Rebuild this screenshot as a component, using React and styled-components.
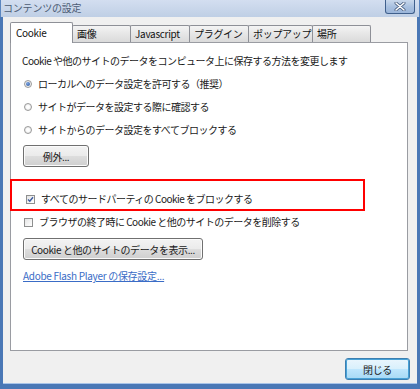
import React from 'react'
import styled, { createGlobalStyle } from 'styled-components'

const GlobalStyle = createGlobalStyle`
  html, body {
    margin: 0;
    padding: 0;
    background: #ffffff;
  }
  body {
    font-family: "Noto Sans CJK JP", "Noto Sans", sans-serif;
    font-size: 10px;
    color: #1a1a1a;
  }
`

const tabs = [
  { label: 'Cookie', width: 63, active: true },
  { label: '画像', width: 59 },
  { label: 'Javascript', width: 60 },
  { label: 'プラグイン', width: 60 },
  { label: 'ポップアップ', width: 65 },
  { label: '場所', width: 59 },
]

const radios = [
  { label: 'ローカルへのデータ設定を許可する（推奨）', checked: true },
  { label: 'サイトがデータを設定する際に確認する' },
  { label: 'サイトからのデータ設定をすべてブロックする' },
]

const Window = styled.div`
  width: 420px;
  height: 389px;
  display: flex;
  flex-direction: column;
  box-sizing: border-box;
  background: #4a78b6;
  overflow: hidden;
`

const TitleBar = styled.div`
  height: 17px;
  flex: none;
  display: flex;
  align-items: flex-start;
  justify-content: space-between;
  padding: 0 4px 0 2px;
  background: linear-gradient(#d3def0, #bfcfe5);
  border-left: 1px solid #5b86c0;
  border-right: 1px solid #5b86c0;
  box-sizing: border-box;
`

const Title = styled.div`
  font-size: 10px;
  letter-spacing: -0.2px;
  line-height: 15px;
  color: #4c5c74;
`

const CloseButton = styled.div`
  width: 30px;
  height: 14px;
  box-sizing: border-box;
  border: 1px solid #3f5f8c;
  border-top: none;
  border-radius: 0 0 3px 3px;
  background: linear-gradient(#c9d8ec, #a7bfdf 55%, #9bb6da);
  display: flex;
  align-items: center;
  justify-content: center;
`

const Client = styled.div`
  flex: 1;
  display: flex;
  flex-direction: column;
  margin: 0 3px 5px 3px;
  background: #f0f0f0;
  border-bottom: 1px solid #a9c4e8;
  padding: 5px 9px 0 7px;
`

const TabRow = styled.div`
  display: flex;
  align-items: flex-end;
  height: 21px;
  margin-bottom: -1px;
  position: relative;
  z-index: 1;
`

const Tab = styled.div`
  width: ${p => p.$width}px;
  box-sizing: border-box;
  height: ${p => (p.$active ? 21 : 17)}px;
  margin-bottom: ${p => (p.$active ? 0 : 1)}px;
  margin-left: ${p => (p.$first ? 0 : -1)}px;
  padding: ${p => (p.$active ? '3px 5px 0' : '1px 4px 0')};
  border: 1px solid #8e9097;
  border-bottom: none;
  border-radius: 2px 2px 0 0;
  background: ${p => (p.$active ? '#ffffff' : 'linear-gradient(#f4f4f4, #e6e6e6 50%, #dadada)')};
  font-size: 10px;
  line-height: 14px;
  letter-spacing: -0.3px;
  color: #111111;
  white-space: nowrap;
`

const Panel = styled.div`
  height: 309px;
  box-sizing: border-box;
  background: #ffffff;
  border: 1px solid #9a9ca2;
  padding: 11px 11px 0 11px;
  display: flex;
  flex-direction: column;
`

const Line = styled.div`
  height: 14px;
  line-height: 14px;
  letter-spacing: -0.5px;
  white-space: nowrap;
  margin-top: ${p => p.$top || 0}px;
`

const OptionRow = styled.div`
  height: 14px;
  display: flex;
  align-items: center;
  gap: 6px;
  padding-left: 2px;
  line-height: 14px;
  letter-spacing: -0.5px;
  white-space: nowrap;
  margin-top: ${p => p.$top || 0}px;
`

const RadioCircle = styled.span`
  width: 8px;
  height: 8px;
  flex: none;
  box-sizing: border-box;
  border-radius: 50%;
  border: 1px solid #9a9a9a;
  background: radial-gradient(circle, #ffffff 30%, #dcdcdc 100%);
  display: flex;
  align-items: center;
  justify-content: center;
  &::after {
    content: '';
    width: 4px;
    height: 4px;
    border-radius: 50%;
    background: ${p => (p.$checked ? 'radial-gradient(circle at 40% 35%, #7ea4e0, #1f4f9a)' : 'transparent')};
  }
`

const CheckBox = styled.span`
  width: 9px;
  height: 9px;
  flex: none;
  box-sizing: border-box;
  border: 1px solid #8e8f8f;
  background: linear-gradient(135deg, #e4e4e4, #ffffff);
  display: flex;
  align-items: center;
  justify-content: center;
`

const Button = styled.div`
  width: ${p => p.$width}px;
  height: 22px;
  box-sizing: border-box;
  margin-top: ${p => p.$top || 0}px;
  margin-left: 1px;
  border: 1px solid #707070;
  border-radius: 3px;
  background: linear-gradient(#f3f3f3, #ebebeb 48%, #dddddd 52%, #cfcfcf);
  box-shadow: inset 0 0 0 1px #fbfbfb;
  display: flex;
  align-items: center;
  justify-content: center;
  letter-spacing: -0.4px;
  white-space: nowrap;
`

const Highlight = styled.div`
  width: 355px;
  height: 32px;
  box-sizing: border-box;
  margin: 12px 0 0 -12px;
  border: 2px solid #ff0000;
  padding: 11px 0 0 12px;
`

const Link = styled.a`
  display: block;
  height: 14px;
  line-height: 14px;
  margin-top: 9px;
  margin-left: 1px;
  color: #3a6cc6;
  text-decoration: underline;
  letter-spacing: -0.3px;
  white-space: nowrap;
`

const Footer = styled.div`
  display: flex;
  justify-content: flex-end;
  padding: 7px 0 0 0;
`

const CloseDialogButton = styled(Button)`
  width: 65px;
  margin: 0 -2px 0 0;
  border-color: #3c7fb1;
  background: linear-gradient(#eaf6fd, #d9f0fc 48%, #bee6fd 52%, #a7d9f5);
  box-shadow: inset 0 0 0 1px #48a1d6;
`

function CheckMark () {
  return (
    <svg width="7" height="7" viewBox="0 0 7 7">
      <path d="M1 3.5 L2.8 5.3 L6 1.2" fill="none" stroke="#3b5ba0" strokeWidth="1.4" />
    </svg>
  )
}

export default function App () {
  return (
    <>
      <GlobalStyle />
      <Window>
        <TitleBar>
          <Title>コンテンツの設定</Title>
          <CloseButton>
            <svg width="12" height="9" viewBox="0 0 12 9">
              <path d="M2 1 L10 8 M10 1 L2 8" stroke="#4a5f80" strokeWidth="3" strokeLinecap="round" />
              <path d="M2 1 L10 8 M10 1 L2 8" stroke="#ffffff" strokeWidth="1.5" strokeLinecap="round" />
            </svg>
          </CloseButton>
        </TitleBar>
        <Client>
          <TabRow>
            {tabs.map((t, i) => (
              <Tab key={t.label} $width={t.width} $active={t.active} $first={i === 0}>
                {t.label}
              </Tab>
            ))}
          </TabRow>
          <Panel>
            <Line>Cookie や他のサイトのデータをコンピュータ上に保存する方法を変更します</Line>
            {radios.map((r) => (
              <OptionRow key={r.label} $top={9}>
                <RadioCircle $checked={r.checked} />
                {r.label}
              </OptionRow>
            ))}
            <Button $width={66} $top={8}>例外...</Button>
            <Highlight>
              <OptionRow>
                <CheckBox><CheckMark /></CheckBox>
                すべてのサードパーティの Cookie をブロックする
              </OptionRow>
            </Highlight>
            <OptionRow $top={4}>
              <CheckBox />
              ブラウザの終了時に Cookie と他のサイトのデータを削除する
            </OptionRow>
            <Button $width={180} $top={9}>Cookie と他のサイトのデータを表示...</Button>
            <Link>Adobe Flash Player の保存設定...</Link>
          </Panel>
          <Footer>
            <CloseDialogButton>閉じる</CloseDialogButton>
          </Footer>
        </Client>
      </Window>
    </>
  )
}
